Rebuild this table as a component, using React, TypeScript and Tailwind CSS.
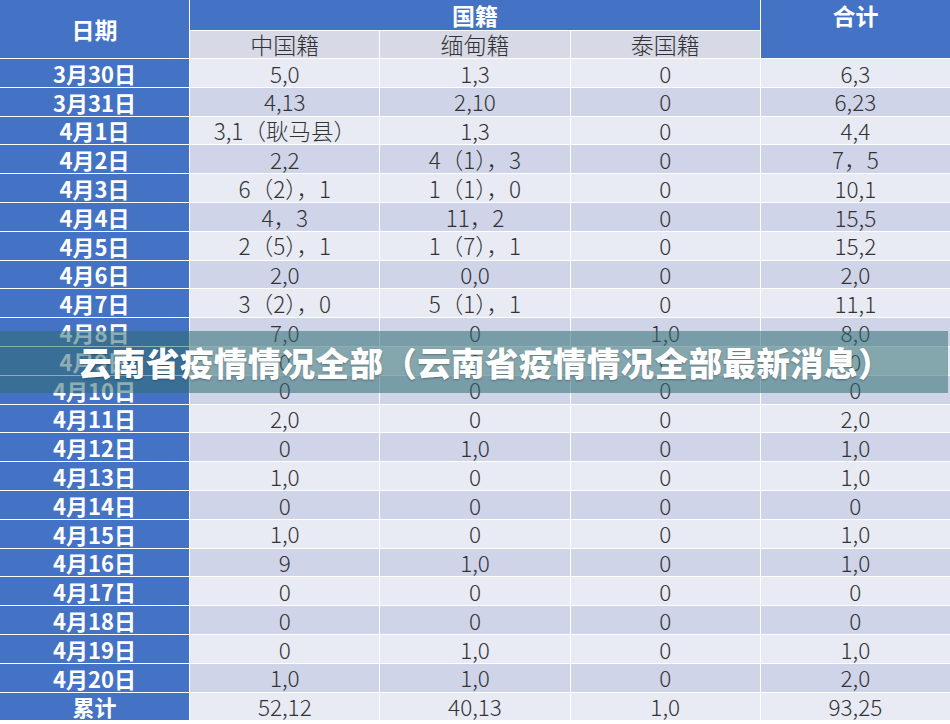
import React from "react";

const rows: [string, string, string, string, string][] = [
  ["3月30日", "5,0", "1,3", "0", "6,3"],
  ["3月31日", "4,13", "2,10", "0", "6,23"],
  ["4月1日", "3,1（耿马县）", "1,3", "0", "4,4"],
  ["4月2日", "2,2", "4（1），3", "0", "7，5"],
  ["4月3日", "6（2），1", "1（1），0", "0", "10,1"],
  ["4月4日", "4，3", "11，2", "0", "15,5"],
  ["4月5日", "2（5），1", "1（7），1", "0", "15,2"],
  ["4月6日", "2,0", "0,0", "0", "2,0"],
  ["4月7日", "3（2），0", "5（1），1", "0", "11,1"],
  ["4月8日", "7,0", "0", "1,0", "8,0"],
  ["4月9日", "0", "0", "0", "0"],
  ["4月10日", "0", "0", "0", "0"],
  ["4月11日", "2,0", "0", "0", "2,0"],
  ["4月12日", "0", "1,0", "0", "1,0"],
  ["4月13日", "1,0", "0", "0", "1,0"],
  ["4月14日", "0", "0", "0", "0"],
  ["4月15日", "1,0", "0", "0", "1,0"],
  ["4月16日", "9", "1,0", "0", "1,0"],
  ["4月17日", "0", "0", "0", "0"],
  ["4月18日", "0", "0", "0", "0"],
  ["4月19日", "0", "1,0", "0", "1,0"],
  ["4月20日", "1,0", "1,0", "0", "2,0"],
  ["累计", "52,12", "40,13", "1,0", "93,25"],
];

const font = { fontFamily: '"Noto Sans CJK SC", "Noto Sans", sans-serif' };

export default function App() {
  return (
    <div
      className="relative w-[950px] h-[724px] overflow-hidden bg-white"
      style={font}
    >
      <div className="flex flex-col gap-px">
        {/* header */}
        <div className="grid grid-cols-5 grid-rows-[30px_27px] gap-px">
          <div className="row-span-2 bg-[#4472c4] flex items-center justify-center text-white font-bold text-[23px] leading-[30px]">
            日期
          </div>
          <div className="col-span-3 bg-[#4472c4] flex items-center justify-center text-white font-bold text-[23px] leading-[30px]">
            国籍
          </div>
          <div className="row-span-2 bg-[#4472c4] flex items-start justify-center text-white font-bold text-[23px] leading-[30px]">
            合计
          </div>
          <div className="bg-[#d7d9e6] flex items-center justify-center text-[#333] font-light text-[23px] leading-none">
            中国籍
          </div>
          <div className="bg-[#d7d9e6] flex items-center justify-center text-[#333] font-light text-[23px] leading-none">
            缅甸籍
          </div>
          <div className="bg-[#d7d9e6] flex items-center justify-center text-[#333] font-light text-[23px] leading-none">
            泰国籍
          </div>
        </div>
        {/* body */}
        {rows.map((r, i) => {
          const bg = i % 2 === 0 ? "bg-[#e8eaf4]" : "bg-[#cfd4e8]";
          return (
            <div key={i} className="grid grid-cols-5 gap-px h-[27.8px]">
              <div className="bg-[#4472c4] flex items-center justify-center text-white font-bold text-[22px] leading-none">
                {r[0]}
              </div>
              {r.slice(1).map((c, j) => (
                <div
                  key={j}
                  className={`${bg} flex items-center justify-center text-[#333] font-light text-[22.5px] leading-none whitespace-nowrap`}
                >
                  {c}
                </div>
              ))}
            </div>
          );
        })}
      </div>
      {/* overlay banner */}
      <div className="absolute left-0 top-[331px] w-[948px] h-[62px] bg-[rgba(50,110,115,0.55)] flex items-center justify-center pl-[22px]">
        <span className="text-white font-black text-[33.5px] leading-none tracking-[0.4px] [text-shadow:0_1px_2px_rgba(0,0,0,0.3)]">
          云南省疫情情况全部（云南省疫情情况全部最新消息）
        </span>
      </div>
    </div>
  );
}
